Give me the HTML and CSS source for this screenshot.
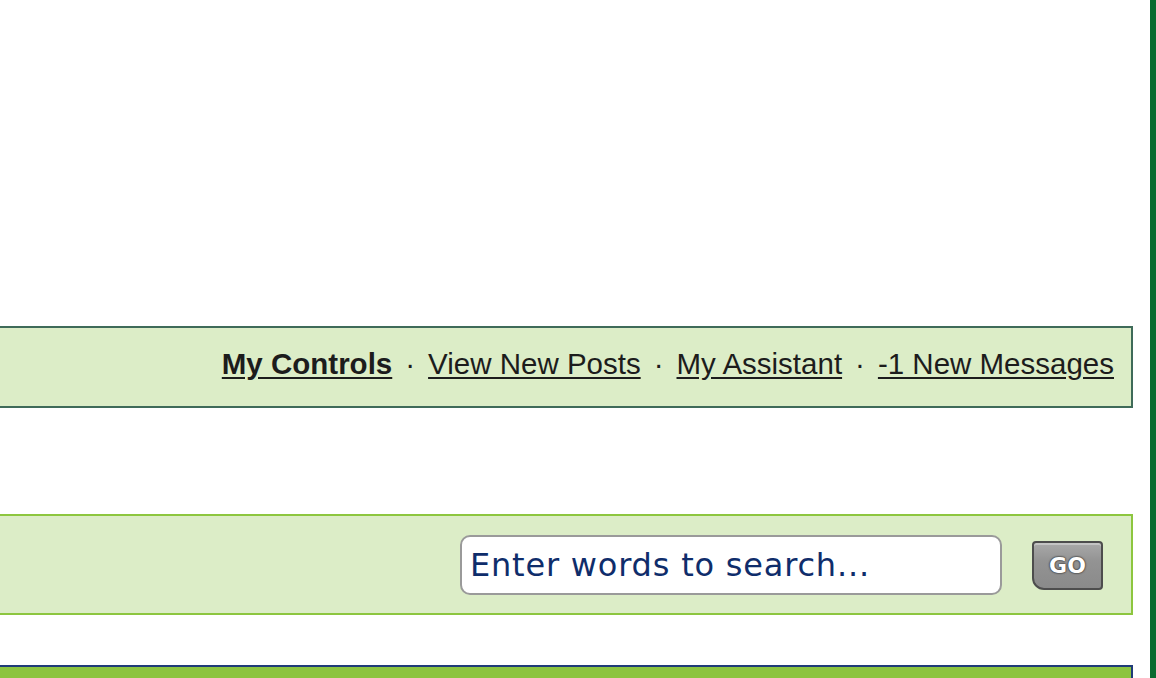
FILE: index.html
```html
<!DOCTYPE html>
<html lang="en">
<head>
    <meta charset="UTF-8">
    <meta name="viewport" content="width=device-width, initial-scale=1.0">
    <title>Forum</title>
    <link rel="stylesheet" href="styles.css">
</head>
<body>
<div class="page">
  <div class="main">
    <!-- user links bar -->
    <div class="userlinks">
      <a href="#" class="strong">My Controls</a>
      <span class="sep">&middot;</span>
      <a href="#">View New Posts</a>
      <span class="sep">&middot;</span>
      <a href="#">My Assistant</a>
      <span class="sep">&middot;</span>
      <a href="#">-1 New Messages</a>
    </div>

    <!-- search bar -->
    <form class="searchbar" onsubmit="return false">
      <input type="text" class="searchbox" value="Enter words to search...">
      <button class="go-btn" type="submit">GO</button>
    </form>

    <div class="maintitle"></div>
  </div>
  <div class="rail"></div>
</div>
</body>
</html>
```

FILE: styles.css
```css
        html, body{
            margin: 0;
            background-color: #ffffff;
            overflow: hidden;
        }
        .page{
            display: flex;
            height: 678px;
        }
        .main{
            width: 1137px;
            margin-left: -4px;
            padding-top: 326px;
        }
        .rail{
            width: 6px;
            margin-left: 17px;
            background-color: #0a6b30;
        }
        .userlinks{
            display: flex;
            justify-content: flex-end;
            align-items: center;
            box-sizing: border-box;
            height: 82px;
            padding: 0 17px 7px 0;
            background-color: #dcedc7;
            border: 2px solid #3f6b59;
            font-family: "Liberation Sans", Arial, sans-serif;
            font-size: 29.5px;
            color: #1c1c1c;
        }
        .userlinks a{
            color: #1c1c1c;
            text-decoration: underline;
            text-underline-offset: 3px;
        }
        .userlinks .strong{
            font-weight: bold;
        }
        .sep{
            margin: 0 13px;
        }
        .searchbar{
            display: flex;
            justify-content: flex-end;
            align-items: center;
            gap: 30px;
            height: 97px;
            margin: 106px 0 0 0;
            padding-right: 28px;
            background-color: #dcedc7;
            border: 2px solid #8dc63f;
        }
        .searchbox{
            box-sizing: border-box;
            width: 542px;
            height: 60px;
            padding: 0 8px;
            border: 2px solid #9a9a9a;
            border-radius: 10px;
            font-family: "DejaVu Sans", Verdana, sans-serif;
            font-size: 32px;
            letter-spacing: 0.8px;
            color: #0f2d6b;
            background-color: #ffffff;
        }
        .go-btn{
            box-sizing: border-box;
            width: 71px;
            height: 49px;
            margin-top: 2px;
            padding: 0;
            border: 2px solid #4d4d4d;
            border-radius: 4px 4px 4px 12px;
            background: linear-gradient(#a9a9a9, #939393 40%, #8a8a8a);
            box-shadow: inset 0 2px 0 #c4c4c4;
            font-family: "DejaVu Sans", Verdana, sans-serif;
            font-size: 22px;
            font-weight: bold;
            color: #ffffff;
            text-shadow: 0 0 2px #3a3a3a, 0 0 2px #3a3a3a, 0 0 1px #555;
        }
        .maintitle{
            height: 20px;
            margin-top: 50px;
            background-color: #8cc43f;
            border: 2px solid #1f3b78;
            border-bottom: 0;
        }
```
